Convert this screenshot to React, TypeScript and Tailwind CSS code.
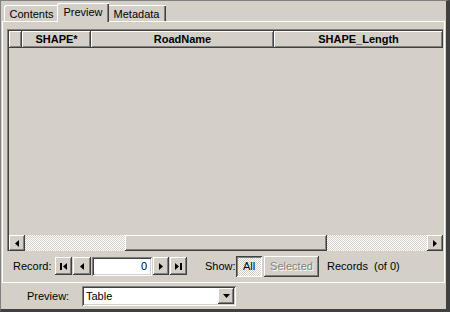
import React from 'react';

// classic 3d edges
const raised =
  'shadow-[inset_-1px_-1px_#404040,inset_1px_1px_#ffffff,inset_-2px_-2px_#808080]';
const sunken =
  'shadow-[inset_1px_1px_#808080,inset_-1px_-1px_#ffffff,inset_2px_2px_#404040,inset_-2px_-2px_#d4d0c8]';
const checker =
  'bg-[repeating-conic-gradient(#ffffff_0%_25%,#d4d0c8_0%_50%)] bg-[length:2px_2px]';

function Tri({ dir }: { dir: 'left' | 'right' | 'down' }) {
  if (dir === 'down') {
    return (
      <svg width="7" height="4" viewBox="0 0 7 4">
        <polygon points="0,0 7,0 3.5,4" fill="#000" />
      </svg>
    );
  }
  return (
    <svg width="4" height="7" viewBox="0 0 4 7">
      {dir === 'left' ? (
        <polygon points="4,0 4,7 0,3.5" fill="#000" />
      ) : (
        <polygon points="0,0 0,7 4,3.5" fill="#000" />
      )}
    </svg>
  );
}

function EndTri({ dir }: { dir: 'first' | 'last' }) {
  return (
    <svg width="7" height="7" viewBox="0 0 7 7">
      {dir === 'first' ? (
        <>
          <rect x="0" y="0" width="2" height="7" fill="#000" />
          <polygon points="7,0 7,7 3,3.5" fill="#000" />
        </>
      ) : (
        <>
          <polygon points="0,0 0,7 4,3.5" fill="#000" />
          <rect x="5" y="0" width="2" height="7" fill="#000" />
        </>
      )}
    </svg>
  );
}

function HeaderCell({ w, label }: { w: string; label?: string }) {
  return (
    <div className={`${w} ${raised} flex h-full items-center justify-center bg-[#d4d0c8] font-bold`}>
      {label}
    </div>
  );
}

export default function App() {
  return (
    <div className="flex h-[312px] w-[450px] flex-col overflow-hidden border-t border-l border-t-[#808080] border-l-[#808080] border-r-[4px] border-b-[3px] border-r-[#404040] border-b-[#404040] bg-[#d4d0c8] pl-[1px] text-[11px] leading-none text-black [font-family:'Liberation_Sans',Arial,sans-serif]">
      {/* Tabs */}
      <div className="flex h-[20px] items-end pl-[2px]">
        <div className="flex h-[16px] w-[55px] items-center justify-center rounded-tl-[2px] pt-[2px] shadow-[inset_1px_1px_#ffffff,inset_-1px_0_#404040,inset_-2px_0_#808080]">
          Contents
        </div>
        <div className="relative z-10 -mx-[2px] -mb-px flex h-[19px] w-[52px] items-center justify-center rounded-tl-[2px] bg-[#d4d0c8] pb-[1px] shadow-[inset_1px_1px_#ffffff,inset_-1px_0_#404040,inset_-2px_0_#808080]">
          Preview
        </div>
        <div className="flex h-[16px] w-[59px] items-center justify-center rounded-tl-[2px] pt-[2px] shadow-[inset_1px_1px_#ffffff,inset_-1px_0_#404040,inset_-2px_0_#808080]">
          Metadata
        </div>
      </div>

      {/* Tab panel */}
      <div className="flex h-[262px] w-[443px] flex-col border border-white pt-[7px] pl-[4px]">
        {/* Grid */}
        <div className="flex h-[222px] w-[436px] flex-col pt-[2px] pl-[2px] shadow-[inset_1px_1px_#808080,inset_2px_2px_#404040]">
          <div className="flex h-[17px]">
            <HeaderCell w="w-[13px]" />
            <HeaderCell w="w-[69px]" label="SHAPE*" />
            <HeaderCell w="w-[183px]" label="RoadName" />
            <HeaderCell w="flex-1" label="SHAPE_Length" />
          </div>
          <div className="flex-1" />
          <div className="flex h-[16px]">
            <div className={`flex w-[16px] items-center justify-center bg-[#d4d0c8] ${raised}`}>
              <Tri dir="left" />
            </div>
            <div className={`flex-1 ${checker}`} />
            <div className={`w-[202px] bg-[#d4d0c8] ${raised}`} />
            <div className={`flex-1 ${checker}`} />
            <div className={`flex w-[16px] items-center justify-center bg-[#d4d0c8] ${raised}`}>
              <Tri dir="right" />
            </div>
          </div>
        </div>

        {/* Record navigation */}
        <div className="mt-[5px] flex h-[20px] items-center">
          <span className="ml-[6px] w-[42px]">Record:</span>
          <div className={`flex h-[18px] w-[17px] items-center justify-center ${raised}`}>
            <EndTri dir="first" />
          </div>
          <div className={`ml-px flex h-[18px] w-[18px] items-center justify-center ${raised}`}>
            <Tri dir="left" />
          </div>
          <div className={`ml-px flex h-[19px] w-[60px] items-center justify-end bg-white pr-[5px] ${sunken}`}>
            0
          </div>
          <div className={`ml-px flex h-[18px] w-[16px] items-center justify-center ${raised}`}>
            <Tri dir="right" />
          </div>
          <div className={`ml-px flex h-[18px] w-[17px] items-center justify-center ${raised}`}>
            <EndTri dir="last" />
          </div>
          <span className="ml-[18px] w-[31px]">Show:</span>
          <div className={`flex h-[21px] w-[26px] items-center justify-center ${checker} shadow-[inset_1px_1px_#404040,inset_-1px_-1px_#ffffff,inset_2px_2px_#808080]`}>
            All
          </div>
          <div className={`ml-[2px] flex h-[21px] w-[55px] items-center justify-center text-[#808080] [text-shadow:1px_1px_#ffffff] ${raised}`}>
            Selected
          </div>
          <span className="ml-[8px]">Records&nbsp;&nbsp;(of 0)</span>
        </div>
      </div>

      {/* Preview selector */}
      <div className="flex h-[26px] items-center">
        <span className="ml-[25px] w-[55px]">Preview:</span>
        <div className={`flex h-[20px] w-[154px] items-center bg-white pl-[4px] pr-[2px] ${sunken}`}>
          <span className="flex-1">Table</span>
          <div className={`flex h-[16px] w-[16px] items-center justify-center bg-[#d4d0c8] ${raised}`}>
            <Tri dir="down" />
          </div>
        </div>
      </div>
    </div>
  );
}
